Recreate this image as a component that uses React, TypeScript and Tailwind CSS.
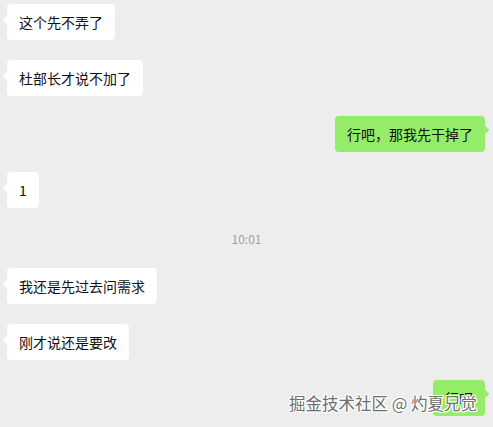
import React from "react";

type Msg =
  | { kind: "in"; text: string }
  | { kind: "out"; text: string }
  | { kind: "time"; text: string };

const messages: Msg[] = [
  { kind: "in", text: "这个先不弄了" },
  { kind: "in", text: "杜部长才说不加了" },
  { kind: "out", text: "行吧，那我先干掉了" },
  { kind: "in", text: "1" },
  { kind: "time", text: "10:01" },
  { kind: "in", text: "我还是先过去问需求" },
  { kind: "in", text: "刚才说还是要改" },
  { kind: "out", text: "行吧" },
];

const Bubble = ({ text, mine }: { text: string; mine: boolean }) => (
  <div className={`flex w-full ${mine ? "justify-end pr-[8px]" : "justify-start pl-[7px]"}`}>
    <div
      className={`relative rounded-[4px] px-[12px] py-[8px] text-[14px] leading-[20px] text-[#111] ${
        mine ? "bg-[#95ec69]" : "bg-white"
      }`}
    >
      <span
        className={`absolute w-[6px] h-[6px] rotate-45 ${
          mine ? "bg-[#95ec69] right-[-3px] top-[11px]" : "bg-white left-[-3px] top-[13px]"
        }`}
      />
      <span className="relative">{text}</span>
    </div>
  </div>
);

const App = () => {
  return (
    <div
      className="relative w-[493px] h-[427px] overflow-hidden bg-[#ededed] pt-[4px] flex flex-col"
      style={{ fontFamily: '"Microsoft YaHei", "Noto Sans CJK SC", "Liberation Sans", sans-serif' }}
    >
      {messages.map((m, index) =>
        m.kind === "time" ? (
          <div
            key={index}
            className="mt-[2px] mb-[21px] h-[17px] text-center text-[12px] leading-[17px] text-[#a0a0a0]"
          >
            {m.text}
          </div>
        ) : (
          <div key={index} className="mb-[20px]">
            <Bubble text={m.text} mine={m.kind === "out"} />
          </div>
        )
      )}

      {/* watermark */}
      <div
        className="absolute right-[16px] bottom-[14px] text-[16.5px] leading-[20px] text-[#6e6e6e]"
        style={{
          textShadow:
            "1px 0 0 #fff, -1px 0 0 #fff, 0 1px 0 #fff, 0 -1px 0 #fff, 1px 1px 0 #fff, -1px -1px 0 #fff, 1px -1px 0 #fff, -1px 1px 0 #fff",
        }}
      >
        掘金技术社区 @ 灼夏兄觉
      </div>
    </div>
  );
};

export default App;
